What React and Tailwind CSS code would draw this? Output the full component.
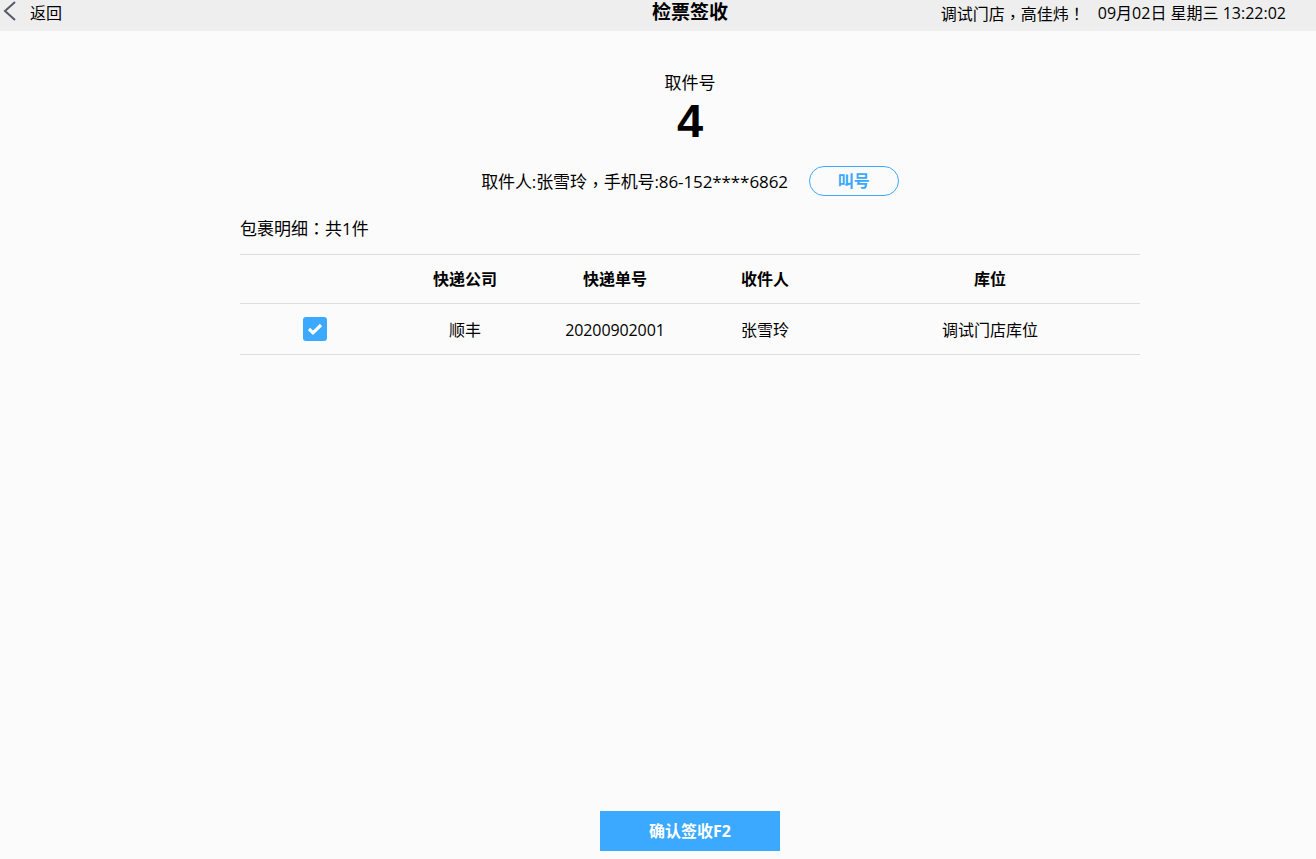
import React from 'react';

const columns = ['', '快递公司', '快递单号', '收件人', '库位'];
const gridCols = 'grid grid-cols-[150px_150px_150px_150px_300px]';

// punctuation sits centred in the cell in the original
const Punct = ({ children }) => <span className="font-['Noto_Sans_CJK_TC',sans-serif]">{children}</span>;
const Comma = () => <span className="inline-block translate-y-[3px] font-['Noto_Sans_CJK_TC',sans-serif]">，</span>;

const CheckedBox = () => (
    <span className="flex h-6 w-6 items-center justify-center rounded-[3px] bg-[#3aa9ff]">
        <svg width="16" height="14" viewBox="0 0 16 14" fill="none">
            <path d="M2 7 L6 10.8 L14 3" stroke="#fff" strokeWidth="3.2" />
        </svg>
    </span>
);

const App = () => {
    return (
        <div className="flex h-[859px] flex-col bg-[#fbfbfb] font-['Open_Sans','Noto_Sans_CJK_SC',sans-serif] text-base text-black">
            {/* Header */}
            <header className="grid h-[31px] grid-cols-[1fr_auto_1fr] items-center bg-[#eeeeee] pb-[5px]">
                <div className="flex items-center">
                    <svg className="mb-[4px] ml-[3px]" width="14" height="20" viewBox="0 0 14 20" fill="none">
                        <path d="M12 1 L2 10 L12 19" stroke="#555b66" strokeWidth="2" />
                    </svg>
                    <span className="ml-[13px]">返回</span>
                </div>
                <h1 className="mb-[2px] pl-[64px] text-[19px] leading-none font-bold">检票签收</h1>
                <div className="flex justify-end pr-[30px] whitespace-nowrap">
                    <span>
                        调试门店<Comma />高佳炜<Punct>！</Punct>
                    </span>
                    <span className="ml-[13px]">09月02日 星期三 13:22:02</span>
                </div>
            </header>

            {/* Content is centred on 690, not on the page */}
            <main className="flex flex-1 flex-col items-center pl-[64px]">
                <p className="mt-[40px] text-[17px] leading-6">取件号</p>
                <p className="font-['Liberation_Sans',sans-serif] text-[47px] leading-[52px] font-bold">4</p>

                <div className="mt-[19px] flex items-center text-[17px]">
                    <span className="tracking-[-0.1px]">
                        取件人:张雪玲<Comma />手机号:86-152****6862
                    </span>
                    <button className="ml-[21px] h-[30px] w-[90px] rounded-full border border-[#3aa9ff] text-base font-bold text-[#3aa9ff]">
                        叫号
                    </button>
                </div>

                {/* Package table */}
                <section className="mt-[20px] w-[900px]">
                    <p className="mb-[13px] text-[17px] leading-6">
                        包裹明细<Punct>：</Punct>共1件
                    </p>
                    <div className={`${gridCols} h-[50px] items-center border-y border-[#dddddd] text-center font-bold`}>
                        {columns.map((col, i) => (
                            <span key={i}>{col}</span>
                        ))}
                    </div>
                    <div className={`${gridCols} h-[51px] items-center border-b border-[#dddddd] text-center`}>
                        <span className="flex justify-center">
                            <CheckedBox />
                        </span>
                        <span className="pt-[2px]">顺丰</span>
                        <span className="pt-[2px] tracking-[-0.1px]">20200902001</span>
                        <span className="pt-[2px]">张雪玲</span>
                        <span className="pt-[2px]">调试门店库位</span>
                    </div>
                </section>

                {/* Confirm */}
                <button className="mt-auto mb-[8px] h-10 w-[180px] bg-[#3aa9ff] font-bold text-white">确认签收F2</button>
            </main>
        </div>
    );
};

export default App;
